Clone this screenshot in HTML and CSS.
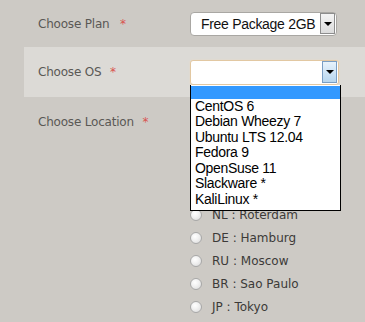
FILE: index.html
```html
<!DOCTYPE html>
<html>
<head>
<meta charset="utf-8">
<link rel="stylesheet" href="styles.css">
</head>
<body>
<div class="form">
  <div class="row row-plan">
    <div class="label">Choose Plan <span class="req">*</span></div>
    <div class="field">
      <div class="select">
        <span class="value">Free Package 2GB</span>
        <span class="arrow"><span class="tri"></span></span>
      </div>
    </div>
  </div>
  <div class="row row-os">
    <div class="label">Choose OS <span class="req">*</span></div>
    <div class="field">
      <div class="select focus">
        <span class="value"></span>
        <span class="arrow blue"><span class="tri"></span></span>
      </div>
      <ul class="dropdown">
        <li class="hl">&nbsp;</li>
        <li>CentOS 6</li>
        <li>Debian Wheezy 7</li>
        <li>Ubuntu LTS 12.04</li>
        <li>Fedora 9</li>
        <li>OpenSuse 11</li>
        <li>Slackware *</li>
        <li>KaliLinux *</li>
      </ul>
    </div>
  </div>
  <div class="row row-loc">
    <div class="label">Choose Location <span class="req">*</span></div>
    <div class="field">
      <ul class="radios">
        <li><span class="radio"></span>US : New York</li>
        <li><span class="radio"></span>UK : London</li>
        <li><span class="radio"></span>FR : Paris</li>
        <li><span class="radio"></span>CA : Toronto</li>
        <li><span class="radio"></span>NL : Roterdam</li>
        <li><span class="radio"></span>DE : Hamburg</li>
        <li><span class="radio"></span>RU : Moscow</li>
        <li><span class="radio"></span>BR : Sao Paulo</li>
        <li><span class="radio"></span>JP : Tokyo</li>
      </ul>
    </div>
  </div>
</div>
</body>
</html>
```

FILE: styles.css
```css
html, body {
  margin: 0;
  padding: 0;
  background: #cdcac5;
  height: 322px;
  overflow: hidden;
}
.form {
  margin-left: 24px;
  font-family: "DejaVu Sans", Verdana, sans-serif;
}
.row {
  display: grid;
  grid-template-columns: 152px 1fr;
  padding-left: 14px;
}
.row-plan {
  height: 47px;
  align-items: center;
}
.row-os {
  height: 50px;
  align-items: center;
  background: #dcdad6;
}
.row-loc {
  padding-top: 14.5px;
}
.label {
  font-size: 12px;
  color: #5a5855;
  letter-spacing: -0.2px;
  white-space: nowrap;
}
.row-loc .label {
  padding-top: 3.5px;
}
.req {
  color: #d9534f;
  margin-left: 5px;
}
.row-plan .req {
  margin-left: 7px;
}
.field {
  position: relative;
}
.select {
  width: 147px;
  height: 24px;
  box-sizing: border-box;
  border: 1px solid #a9a7a3;
  border-radius: 4px;
  background: #fff;
  display: flex;
  align-items: center;
  justify-content: space-between;
  padding: 0 1px 0 10px;
}
.select.focus {
  width: 149px;
  height: 25px;
  border-color: #e2c8a2;
  border-radius: 3px;
  box-shadow: 0 0 2px #ecdcc4;
}
.value {
  font-family: "Liberation Sans", Arial, sans-serif;
  font-size: 14px;
  color: #111;
  letter-spacing: -0.3px;
  white-space: nowrap;
}
.arrow {
  width: 15px;
  height: 21px;
  box-sizing: border-box;
  border: 1px solid #8d8d8d;
  background: linear-gradient(#f4f4f4, #dcdcdc);
  display: flex;
  align-items: center;
  justify-content: center;
  flex: none;
}
.arrow.blue {
  height: 22px;
  border-color: #7a9ec4;
  background: linear-gradient(#e8f3fc, #b7d6ef);
}
.tri {
  width: 0;
  height: 0;
  border-left: 4px solid transparent;
  border-right: 4px solid transparent;
  border-top: 4px solid #000;
}
.dropdown {
  position: absolute;
  left: 0;
  top: 25px;
  width: 151px;
  box-sizing: border-box;
  margin: 0;
  padding: 0 0 3px 0;
  list-style: none;
  background: #fff;
  border: 1px solid #000;
  border-top: none;
  z-index: 5;
  font-family: "Liberation Sans", Arial, sans-serif;
  font-size: 14px;
  color: #000;
  letter-spacing: -0.3px;
}
.dropdown li {
  height: 15.5px;
  line-height: 15.5px;
  padding-left: 4px;
}
.dropdown li.hl {
  background: #3399ff;
  height: 13px;
  margin-top: 1px;
}
.radios {
  list-style: none;
  margin: 0;
  padding: 0;
}
.radios li {
  display: flex;
  align-items: center;
  height: 23px;
  font-size: 12px;
  color: #3c3a38;
}
.radio {
  width: 12px;
  height: 12px;
  box-sizing: border-box;
  border-radius: 50%;
  border: 1px solid #a8a8a8;
  background: radial-gradient(circle at 40% 35%, #ffffff 0%, #f2f2f2 40%, #d8d8d8 100%);
  margin-right: 10px;
  flex: none;
}
```
